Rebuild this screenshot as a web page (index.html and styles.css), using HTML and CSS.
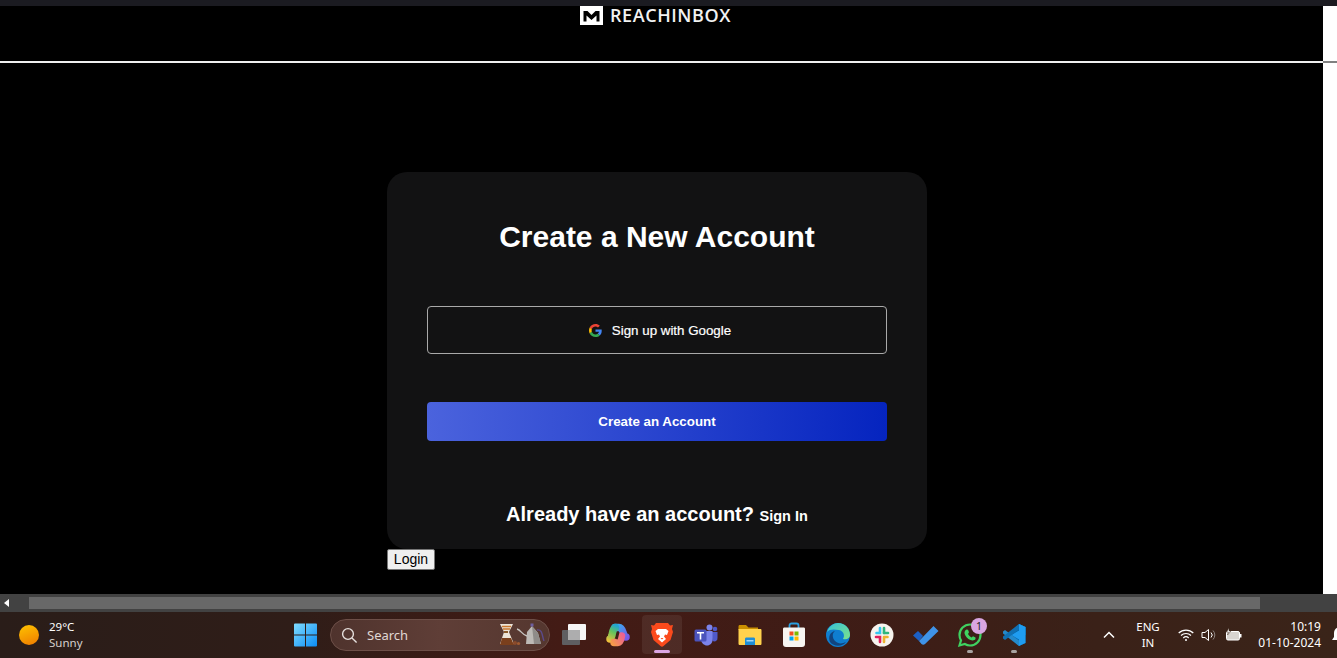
FILE: index.html
```html
<!DOCTYPE html>
<html lang="en">
<head>
    <meta charset="UTF-8">
    <meta name="viewport" content="width=device-width, initial-scale=1.0">
    <title>Reachinbox - Create a New Account</title>
    <link rel="stylesheet" href="styles.css">
</head>
<body>
    <div class="top-edge"></div>

    <div class="viewport">
        <header class="site-header">
            <div class="logo">
                <svg class="logo-mark" viewBox="0 0 23 19">
                    <rect width="23" height="19" fill="#fff"/>
                    <path d="M3.5 5H7.5L11.5 9L15.5 5H19.5V15.5H16.5V9.5L11.5 14L6.5 9.5V15.5H3.5Z" fill="#000"/>
                </svg>
                <span class="logo-text">REACHINBOX</span>
            </div>
        </header>
        <div class="gutter gutter-top"></div>

        <main class="page">
            <div class="page-column">
                <section class="card">
                    <h1 class="card-title">Create a New Account</h1>
                    <a class="google-btn" href="#">
                        <svg class="google-icon" viewBox="0 0 48 48">
                            <path fill="#EA4335" d="M24 9.5c3.54 0 6.71 1.22 9.21 3.6l6.85-6.85C35.9 2.38 30.47 0 24 0 14.62 0 6.51 5.38 2.56 13.22l7.98 6.19C12.43 13.72 17.74 9.5 24 9.5z"/>
                            <path fill="#4285F4" d="M46.98 24.55c0-1.57-.15-3.09-.38-4.55H24v9.02h12.94c-.58 2.96-2.26 5.48-4.78 7.18l7.73 6c4.51-4.18 7.09-10.36 7.09-17.65z"/>
                            <path fill="#FBBC05" d="M10.53 28.59c-.48-1.45-.76-2.99-.76-4.59s.27-3.14.76-4.59l-7.98-6.19C.92 16.46 0 20.12 0 24c0 3.88.92 7.54 2.56 10.78l7.97-6.19z"/>
                            <path fill="#34A853" d="M24 48c6.48 0 11.93-2.13 15.89-5.81l-7.73-6c-2.15 1.45-4.92 2.3-8.16 2.3-6.26 0-11.57-4.22-13.47-9.91l-7.98 6.19C6.51 42.62 14.62 48 24 48z"/>
                        </svg>
                        <span>Sign up with Google</span>
                    </a>
                    <button class="create-btn">Create an Account</button>
                    <p class="signin-line">Already have an account? <a class="signin-link" href="#">Sign In</a></p>
                </section>
                <button class="login-btn">Login</button>
            </div>
        </main>
        <div class="gutter"></div>
    </div>

    <div class="h-scrollbar">
        <div class="scroll-arrow"></div>
        <div class="scroll-thumb"></div>
    </div>

    <footer class="taskbar">
        <div class="weather">
            <div class="sun"></div>
            <div class="weather-text">
                <div class="temp">29°C</div>
                <div class="cond">Sunny</div>
            </div>
        </div>

        <div class="start-btn">
            <svg width="25" height="24" viewBox="0 0 25 24">
                <defs>
                    <linearGradient id="win" x1="0" y1="0" x2="1" y2="1">
                        <stop offset="0" stop-color="#7fdcff"/>
                        <stop offset="1" stop-color="#0b8cf5"/>
                    </linearGradient>
                </defs>
                <path fill="url(#win)" d="M1 1.5A1 1 0 0 1 2 .5H12V11.5H1ZM13 .5H23A1 1 0 0 1 24 1.5V11.5H13ZM1 12.5H12V23.5H2A1 1 0 0 1 1 22.5ZM13 12.5H24V22.5A1 1 0 0 1 23 23.5H13Z"/>
            </svg>
        </div>

        <div class="search-pill">
            <svg class="search-icon" width="17" height="17" viewBox="0 0 17 17" fill="none" stroke="#e6e0dd" stroke-width="1.4">
                <circle cx="7" cy="7" r="5.4"/>
                <path d="M11 11L15.6 15.6"/>
            </svg>
            <span class="search-label">Search</span>
            <svg class="search-art" width="46" height="24" viewBox="0 0 46 24">
                <path d="M1 1H14L10 9L15 21H1L5 9Z" fill="#ece4d8"/>
                <path d="M3 15H12L15 22H1Z" fill="#7a3f1c"/>
                <path d="M3 3.500H12M4 6H11" stroke="#c9772e" stroke-width="1.4"/>
                <rect x="5" y="8" width="4" height="2" fill="#8a5a2a"/>
                <circle cx="16" cy="20" r="2" fill="#8a4a2a"/>
                <circle cx="19.500" cy="20.500" r="1.600" fill="#a05a30"/>
                <path d="M28 9L33 3L39 10L42 21H27Z" fill="#bdbab6"/>
                <path d="M33 3L39 10L42 21H35Z" fill="#8f8c89"/>
                <path d="M28 13C23 12 22 7 18 6" stroke="#c9c6c2" stroke-width="1.3" fill="none"/>
                <path d="M38 7C44 6 43 14 45 18" stroke="#5b4a8a" stroke-width="1.4" fill="none"/>
                <rect x="31.500" y="0.500" width="3" height="3" fill="#6f5fa0"/>
            </svg>
        </div>

        <div class="app-list">
            <div class="app">
                <svg width="24" height="24" viewBox="0 0 24 24">
                    <rect x="6" y="1" width="18" height="16" rx="1" fill="#f6f6f6"/>
                    <rect x="0" y="7" width="18" height="15" rx="1" fill="#5e5e61"/>
                    <rect x="6" y="7" width="12" height="10" fill="#adadae"/>
                </svg>
            </div>
            <div class="app">
                <svg width="24" height="24" viewBox="0 0 24 24" fill="none" stroke-linecap="round">
                    <defs>
                        <linearGradient id="cp1" gradientUnits="userSpaceOnUse" x1="8" y1="2" x2="22" y2="16">
                            <stop offset="0" stop-color="#2fb6ee"/>
                            <stop offset="1" stop-color="#7a55e8"/>
                        </linearGradient>
                        <linearGradient id="cp2" gradientUnits="userSpaceOnUse" x1="3" y1="19" x2="11" y2="3">
                            <stop offset="0" stop-color="#f5c13b"/>
                            <stop offset="0.6" stop-color="#62c45c"/>
                            <stop offset="1" stop-color="#22a6d0"/>
                        </linearGradient>
                        <linearGradient id="cp3" gradientUnits="userSpaceOnUse" x1="6" y1="20" x2="18" y2="12">
                            <stop offset="0" stop-color="#f59a4a"/>
                            <stop offset="1" stop-color="#ec5f96"/>
                        </linearGradient>
                    </defs>
                    <path stroke="url(#cp1)" stroke-width="7.500" d="M9 4.500H13C16 4.500 16.500 8 17.500 11C18 13 19 14 20 14"/>
                    <path stroke="url(#cp2)" stroke-width="7.500" d="M9.500 4.500C7.500 5 6.500 9 6 12C5.500 14 5 16 4 16"/>
                    <path stroke="url(#cp3)" stroke-width="7.500" d="M8 19.500H12C14 19.500 15 16 15.500 13"/>
                    <path stroke="#3a2418" stroke-width="1.800" d="M11 15.500L12.500 9.500"/>
                </svg>
            </div>
            <div class="app app-active">
                <svg width="24" height="26" viewBox="0 0 24 26">
                    <path fill="#fb4a1c" d="M6 1H18L20 3.500L23 3L22 7L23 10L20.500 18L13.500 24C12.500 25 11.500 25 10.500 24L3.500 18L1 10L2 7L1 3L4 3.500Z"/>
                    <path fill="#fff" d="M8 7H16L18.500 9L17 13L15 12.500L14 14.500L16 17L12 20.500L8 17L10 14.500L9 12.500L7 13L5.500 9Z"/>
                    <path fill="#fb4a1c" d="M10.500 16H13.500L12 17.500Z"/>
                </svg>
            </div>
            <div class="app">
                <svg width="24" height="24" viewBox="0 0 24 24">
                    <circle cx="15.500" cy="4.500" r="3" fill="#7b83eb"/>
                    <circle cx="21" cy="6" r="2.300" fill="#5059c9"/>
                    <path fill="#5059c9" d="M17 9H23.500V15C23.500 18 21 19 18.500 18Z"/>
                    <path fill="#7b83eb" d="M7 8H18.500V17C18.500 20 16 22.500 13 22.500C10 22.500 7.500 20 7 17Z"/>
                    <rect x="0.500" y="6.500" width="12" height="12" rx="1.500" fill="#4b53bc"/>
                    <path fill="#fff" d="M3 9H10V10.500H7.300V16.500H5.700V10.500H3Z"/>
                </svg>
            </div>
            <div class="app">
                <svg width="24" height="24" viewBox="0 0 24 24">
                    <path fill="#c98f00" d="M0.500 3.500C0.500 2.500 1 2 2 2H8L10.500 4.500H20V7H0.500Z"/>
                    <path fill="#ffd24d" d="M0.500 6H22.500C23 6 23.500 6.500 23.500 7V20.500C23.500 21.500 23 22 22 22H2C1 22 0.500 21.500 0.500 20.500Z"/>
                    <path fill="#1f8ed6" d="M7 16C7 15 7.500 14.500 8.500 14.500H15.500C16.500 14.500 17 15 17 16V22H7Z"/>
                    <rect x="8.500" y="17" width="7" height="1.500" fill="#9fd6f5"/>
                </svg>
            </div>
            <div class="app">
                <svg width="24" height="26" viewBox="0 0 24 26">
                    <path d="M7.500 7V3.500C7.500 2 8.500 1.500 9.500 1.500H14.500C15.500 1.500 16.500 2 16.500 3.500V7" fill="none" stroke="#2a9fe0" stroke-width="1.800"/>
                    <path fill="#f7f5f2" d="M1 7C1 6 1.500 5.500 2.500 5.500H21.500C22.500 5.500 23 6 23 7V22C23 24 22 25 20 25H4C2 25 1 24 1 22Z"/>
                    <rect x="7.500" y="9.500" width="4" height="4" fill="#f25022"/>
                    <rect x="12.500" y="9.500" width="4" height="4" fill="#7fba00"/>
                    <rect x="7.500" y="14.500" width="4" height="4" fill="#00a4ef"/>
                    <rect x="12.500" y="14.500" width="4" height="4" fill="#ffb900"/>
                </svg>
            </div>
            <div class="app">
                <svg width="24" height="24" viewBox="0 0 24 24">
                    <defs>
                        <linearGradient id="edge1" x1="0" y1="0" x2="1" y2="1">
                            <stop offset="0" stop-color="#35c1d8"/>
                            <stop offset="1" stop-color="#7be28a"/>
                        </linearGradient>
                    </defs>
                    <circle cx="12" cy="12" r="12" fill="#0f7ed0"/>
                    <path fill="url(#edge1)" d="M1 9C3 3 8 0 12 0C19 0 24 5 24 12C24 15 21 17 17 16C19 13 18 8 13 7C8 6 3 6 1 9Z"/>
                    <path fill="#12447e" d="M4 19C2 14 4 9 9 8C6 10 6 15 9 18C12 21 16 21 20 19C16 24 8 24 4 19Z"/>
                </svg>
            </div>
            <div class="app">
                <svg width="24" height="24" viewBox="0 0 24 24">
                    <circle cx="12" cy="12" r="11.500" fill="#f6f3ee"/>
                    <path d="M10 5V10H6.500" fill="none" stroke="#36c5f0" stroke-width="2.600" stroke-linecap="round"/>
                    <path d="M14 5V10" stroke="#2eb67d" stroke-width="2.600" stroke-linecap="round"/>
                    <path d="M14 10H18" stroke="#2eb67d" stroke-width="2.600" stroke-linecap="round"/>
                    <path d="M14 14H17.500M14 14V19" fill="none" stroke="#ecb22e" stroke-width="2.600" stroke-linecap="round"/>
                    <path d="M6 14H10V19" fill="none" stroke="#e01e5a" stroke-width="2.600" stroke-linecap="round"/>
                </svg>
            </div>
            <div class="app">
                <svg width="26" height="22" viewBox="0 0 26 22">
                    <path fill="#1c5fc4" d="M0 11.500L5 7L10 12L6 17Z"/>
                    <path fill="#3f93e8" d="M6 17L20.500 2L25.500 7L12 20C11 21 9.500 21 8.500 20Z"/>
                </svg>
            </div>
            <div class="app app-running">
                <svg width="26" height="26" viewBox="0 0 26 26">
                    <path d="M13 2.500C7.200 2.500 2.500 7.200 2.500 13C2.500 15 3 16.800 4 18.400L2.500 23.500L7.800 22C9.300 22.900 11.100 23.500 13 23.500C18.800 23.500 23.500 18.800 23.500 13C23.500 7.200 18.800 2.500 13 2.500Z" fill="none" stroke="#3fd260" stroke-width="2.200"/>
                    <path fill="#3fd260" d="M9.500 7.500L11 7.700L12 10.300L11 12C11.800 13.500 13 14.700 14.600 15.500L16 14.200L18.500 15.400L18.500 17C17.500 18.500 15.500 18.800 13.500 18C10.500 16.800 8.500 14.500 7.700 12C7.200 10 7.800 8.500 9.500 7.500Z"/>
                </svg>
                <span class="badge">1</span>
            </div>
            <div class="app app-running">
                <svg width="24" height="24" viewBox="0 0 24 24">
                    <path fill="#0065a9" d="M17 1L23.500 4V20L17 23L6 12.500Z"/>
                    <path fill="#007acc" d="M17 1L23.500 4V12H17Z"/>
                    <path fill="#1f9cf0" d="M17 1L17 23L23.500 20V4ZM17 7.500L9.500 12L17 16.500Z"/>
                    <path fill="#2489ca" d="M1 8.500L3 7L17 17.500V23L1 10.500Z"/>
                    <path fill="#1070b3" d="M1 15.500L3 17L17 6.500V1L1 13.500Z"/>
                </svg>
            </div>
        </div>

        <div class="tray">
            <svg class="chevron" width="12" height="8" viewBox="0 0 12 8" fill="none" stroke="#fff" stroke-width="1.500">
                <path d="M1 6.500L6 1.500L11 6.500"/>
            </svg>
            <div class="lang">ENG<br>IN</div>
            <svg class="wifi" width="16" height="14" viewBox="0 0 16 14" fill="none" stroke="#fff" stroke-width="1.200">
                <path d="M.7 5A10.500 10.500 0 0 1 15.300 5M3 7.500A7.200 7.200 0 0 1 13 7.500M5.300 10A3.900 3.900 0 0 1 10.700 10"/>
                <circle cx="8" cy="12" r="1" fill="#fff" stroke="none"/>
            </svg>
            <svg class="volume" width="16" height="14" viewBox="0 0 16 14" fill="none" stroke="#fff" stroke-width="1">
                <path d="M1 4.500H4L7.500 1.500V12.500L4 9.500H1Z"/>
                <path d="M10 4.500A3.500 3.500 0 0 1 10 9.500"/>
                <path d="M12 2.500A6.500 6.500 0 0 1 12 11.500" stroke="#8d8480"/>
            </svg>
            <svg class="battery" width="17" height="14" viewBox="0 0 17 14">
                <rect x="1.500" y="3.500" width="13" height="8.500" rx="1.500" fill="#d8d4d0" stroke="#fff"/>
                <rect x="15" y="6" width="1.500" height="3.500" fill="#fff"/>
                <path d="M4 0L1.500 4H3.500L2.500 7L6 3H4Z" fill="#fff" stroke="#3a2418" stroke-width="0.500"/>
            </svg>
            <div class="clock">
                <div>10:19</div>
                <div>01-10-2024</div>
            </div>
            <svg class="bell" width="18" height="18" viewBox="0 0 18 18">
                <path d="M9 1C5 1 3 4 3 7V11L1 14H17L15 11V7C15 4 13 1 9 1Z" fill="#fff"/>
                <path d="M7 15.500H11L9 17.500Z" fill="#fff"/>
                <path d="M6 6H12M6 9H12" stroke="#3a2418" stroke-width="1.200"/>
            </svg>
        </div>
    </footer>
</body>
</html>
```

FILE: styles.css
```css
* {
    box-sizing: border-box;
}

html, body {
    margin: 0;
    padding: 0;
    height: 100%;
    overflow: hidden;
}

body {
    display: flex;
    flex-direction: column;
    font-family: "Liberation Sans", Arial, sans-serif;
    color: #fff;
    background: #000;
}

.top-edge {
    height: 6px;
    background: #1b1b21;
}

/* page area with the white gutter on the right */
.viewport {
    display: grid;
    grid-template-columns: 1323px 14px;
    grid-template-rows: 57px 531px;
}

.gutter {
    background: #fff;
}

.gutter-top {
    border-bottom: 2px solid #808080;
}

.site-header {
    display: flex;
    justify-content: center;
    background: #000;
    border-bottom: 2px solid #efefef;
    padding-right: 12px;
}

.logo {
    display: flex;
    height: 19px;
    align-items: center;
    gap: 7px;
}

.logo-mark {
    width: 23px;
    height: 19px;
}

.logo-text {
    font-family: "Open Sans", sans-serif;
    font-size: 18px;
    font-weight: 600;
    letter-spacing: 0.6px;
    color: #f2f2f2;
    padding-bottom: 2px;
}

.page {
    background: #000;
    display: flex;
    justify-content: center;
    padding: 109px 9px 0 0;
}

.page-column {
    width: 540px;
}

.card {
    height: 377px;
    padding: 0 40px;
    background: #121213;
    border-radius: 20px;
    display: flex;
    flex-direction: column;
    align-items: stretch;
}

.card-title {
    margin: 47px 0 0;
    height: 36px;
    font-size: 30px;
    line-height: 36px;
    font-weight: 700;
    text-align: center;
}

.google-btn {
    margin-top: 51px;
    height: 48px;
    padding-left: 6px;
    display: flex;
    justify-content: center;
    align-items: center;
    gap: 10px;
    border: 1px solid #a9a9a9;
    border-radius: 4px;
    color: #fff;
    text-decoration: none;
    font-size: 13.330px;
    -webkit-text-stroke: 0.2px #fff;
}

.google-icon {
    width: 13px;
    height: 13px;
}

.create-btn {
    margin-top: 48px;
    height: 39px;
    padding: 0 0 1px;
    border: none;
    border-radius: 4px;
    background: linear-gradient(91deg, #4b63dd, #0524bf);
    color: #fff;
    font-family: inherit;
    font-size: 13.330px;
    font-weight: 700;
}

.signin-line {
    margin: 60px 0 0;
    text-align: center;
    font-size: 20px;
    line-height: 26px;
    font-weight: 700;
}

.signin-link {
    color: #fff;
    text-decoration: none;
    font-size: 14.500px;
}

.login-btn {
    display: block;
    width: 48px;
    height: 21px;
    padding: 0 0 1px;
    background: #efefef;
    border: 1px solid #767676;
    border-radius: 2px;
    font-family: inherit;
    font-size: 14px;
    color: #000;
}

/* horizontal scrollbar */
.h-scrollbar {
    height: 18px;
    display: flex;
    align-items: center;
    background: #424242;
    padding-right: 77px;
}

.scroll-arrow {
    width: 29px;
    padding-left: 4px;
    flex-shrink: 0;
}

.scroll-arrow::before {
    content: "";
    display: block;
    width: 0;
    height: 0;
    border-style: solid;
    border-width: 4px 5px 4px 0;
    border-color: transparent #fff transparent transparent;
}

.scroll-thumb {
    flex: 1;
    height: 12px;
    background: #686868;
}

/* taskbar */
.taskbar {
    height: 46px;
    display: flex;
    align-items: center;
    overflow: hidden;
    font-family: "Noto Sans", sans-serif;
    background: linear-gradient(90deg, #2a1d19 0%, #2f1d18 22%, #431b15 42%, #3f1c16 62%, #3a2118 82%, #3a2419 100%);
}

.weather {
    width: 281px;
    flex-shrink: 0;
    display: flex;
    align-items: center;
    padding-left: 19px;
    gap: 10px;
}

.sun {
    width: 20px;
    height: 20px;
    border-radius: 50%;
    background: linear-gradient(160deg, #ffc400, #ee7a00);
}

.weather-text {
    font-size: 11.500px;
    line-height: 16px;
}

.cond {
    color: #d6d0cc;
}

.start-btn {
    width: 49px;
    flex-shrink: 0;
    display: flex;
    justify-content: center;
}

.search-pill {
    width: 220px;
    height: 32px;
    flex-shrink: 0;
    display: flex;
    align-items: center;
    padding: 0 0 0 10px;
    background: linear-gradient(90deg, #4f332d, #5f3e37 50%, #55372f);
    border: 1px solid #6d4f48;
    border-radius: 16px;
}

.search-label {
    margin-left: 9px;
    font-size: 13px;
    color: #e0d8d4;
}

.search-art {
    margin-left: auto;
    margin-right: 4px;
}

.app-list {
    display: flex;
    margin-left: 2px;
    flex-shrink: 0;
}

.app {
    width: 44px;
    height: 46px;
    display: flex;
    justify-content: center;
    align-items: center;
    position: relative;
    flex-shrink: 0;
}

.app-active::before {
    content: "";
    position: absolute;
    left: 2px;
    right: 2px;
    top: 3px;
    bottom: 4px;
    border-radius: 4px;
    background: rgba(255, 255, 255, 0.07);
}

.app-active svg {
    position: relative;
}

.app-active::after,
.app-running::after {
    content: "";
    position: absolute;
    bottom: 5px;
    left: 50%;
    width: 6px;
    height: 3px;
    margin-left: -3px;
    border-radius: 2px;
    background: #a9a4a2;
}

.app-active::after {
    width: 16px;
    margin-left: -8px;
    background: #dca6e4;
}

.badge {
    position: absolute;
    top: 6px;
    right: 5px;
    width: 16px;
    height: 16px;
    border-radius: 50%;
    background: #d9a6e2;
    color: #222;
    font-size: 10.500px;
    line-height: 16px;
    text-align: center;
}

.tray {
    display: flex;
    align-items: center;
    flex-shrink: 0;
    margin-left: 67px;
}

.chevron {
    flex-shrink: 0;
}

.lang {
    width: 40px;
    margin-left: 13px;
    font-size: 11.500px;
    line-height: 16px;
    text-align: center;
}

.wifi {
    margin-left: 10px;
}

.volume {
    margin-left: 7px;
}

.battery {
    margin-left: 8px;
}

.clock {
    width: 70px;
    margin-left: 9px;
    text-align: right;
    font-size: 12px;
    line-height: 16px;
}

.bell {
    margin-left: 10px;
    flex-shrink: 0;
}
```
